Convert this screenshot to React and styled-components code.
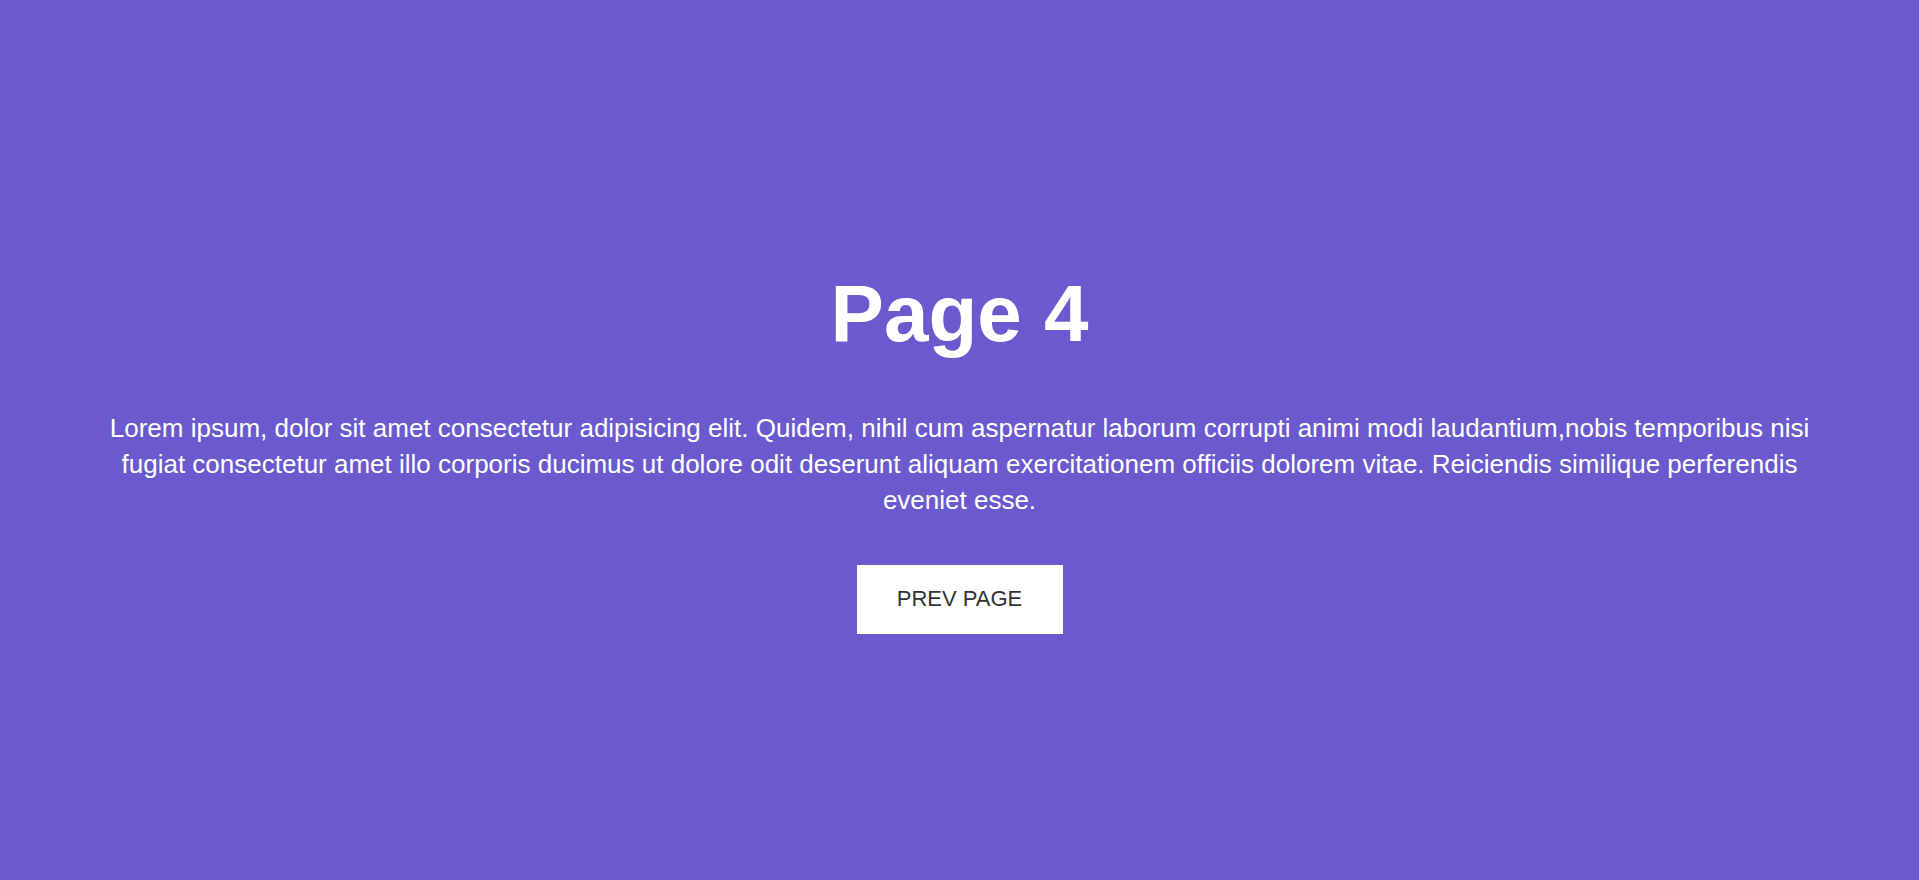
import React from "react"
import styled, { createGlobalStyle } from "styled-components"

const GlobalStyle = createGlobalStyle`
    * {
        box-sizing: border-box;
    }
    body {
        margin: 0;
        font-family: "Liberation Sans", Arial, sans-serif;
        background: slateblue;
    }
`

const Page = styled.section`
    min-height: 100vh;
    display: flex;
    flex-flow: column nowrap;
    align-items: center;
    justify-content: center;
    padding: 21px 96px 0;
    background: slateblue;
    color: white;
    text-align: center;
`

const Title = styled.h1`
    margin: 0 0 50px;
    font-size: 80px;
    font-weight: bold;
    line-height: normal;
`

const Text = styled.p`
    margin: 0 0 47px;
    font-size: 26px;
    line-height: 36px;
`

const Button = styled.button`
    width: 206px;
    height: 69px;
    border: none;
    background: white;
    color: #333;
    font-family: "Liberation Sans", Arial, sans-serif;
    font-size: 22px;
    cursor: pointer;
`

export default function App() {
    return (
        <>
            <GlobalStyle />
            <Page>
                <Title>Page 4</Title>
                <Text>
                    Lorem ipsum, dolor sit amet consectetur adipisicing elit. Quidem, nihil cum aspernatur laborum
                    corrupti animi modi laudantium,nobis temporibus nisi fugiat consectetur amet illo corporis ducimus
                    ut dolore odit deserunt aliquam exercitationem officiis dolorem vitae. Reiciendis similique
                    perferendis eveniet esse.
                </Text>
                <Button>PREV PAGE</Button>
            </Page>
        </>
    )
}
